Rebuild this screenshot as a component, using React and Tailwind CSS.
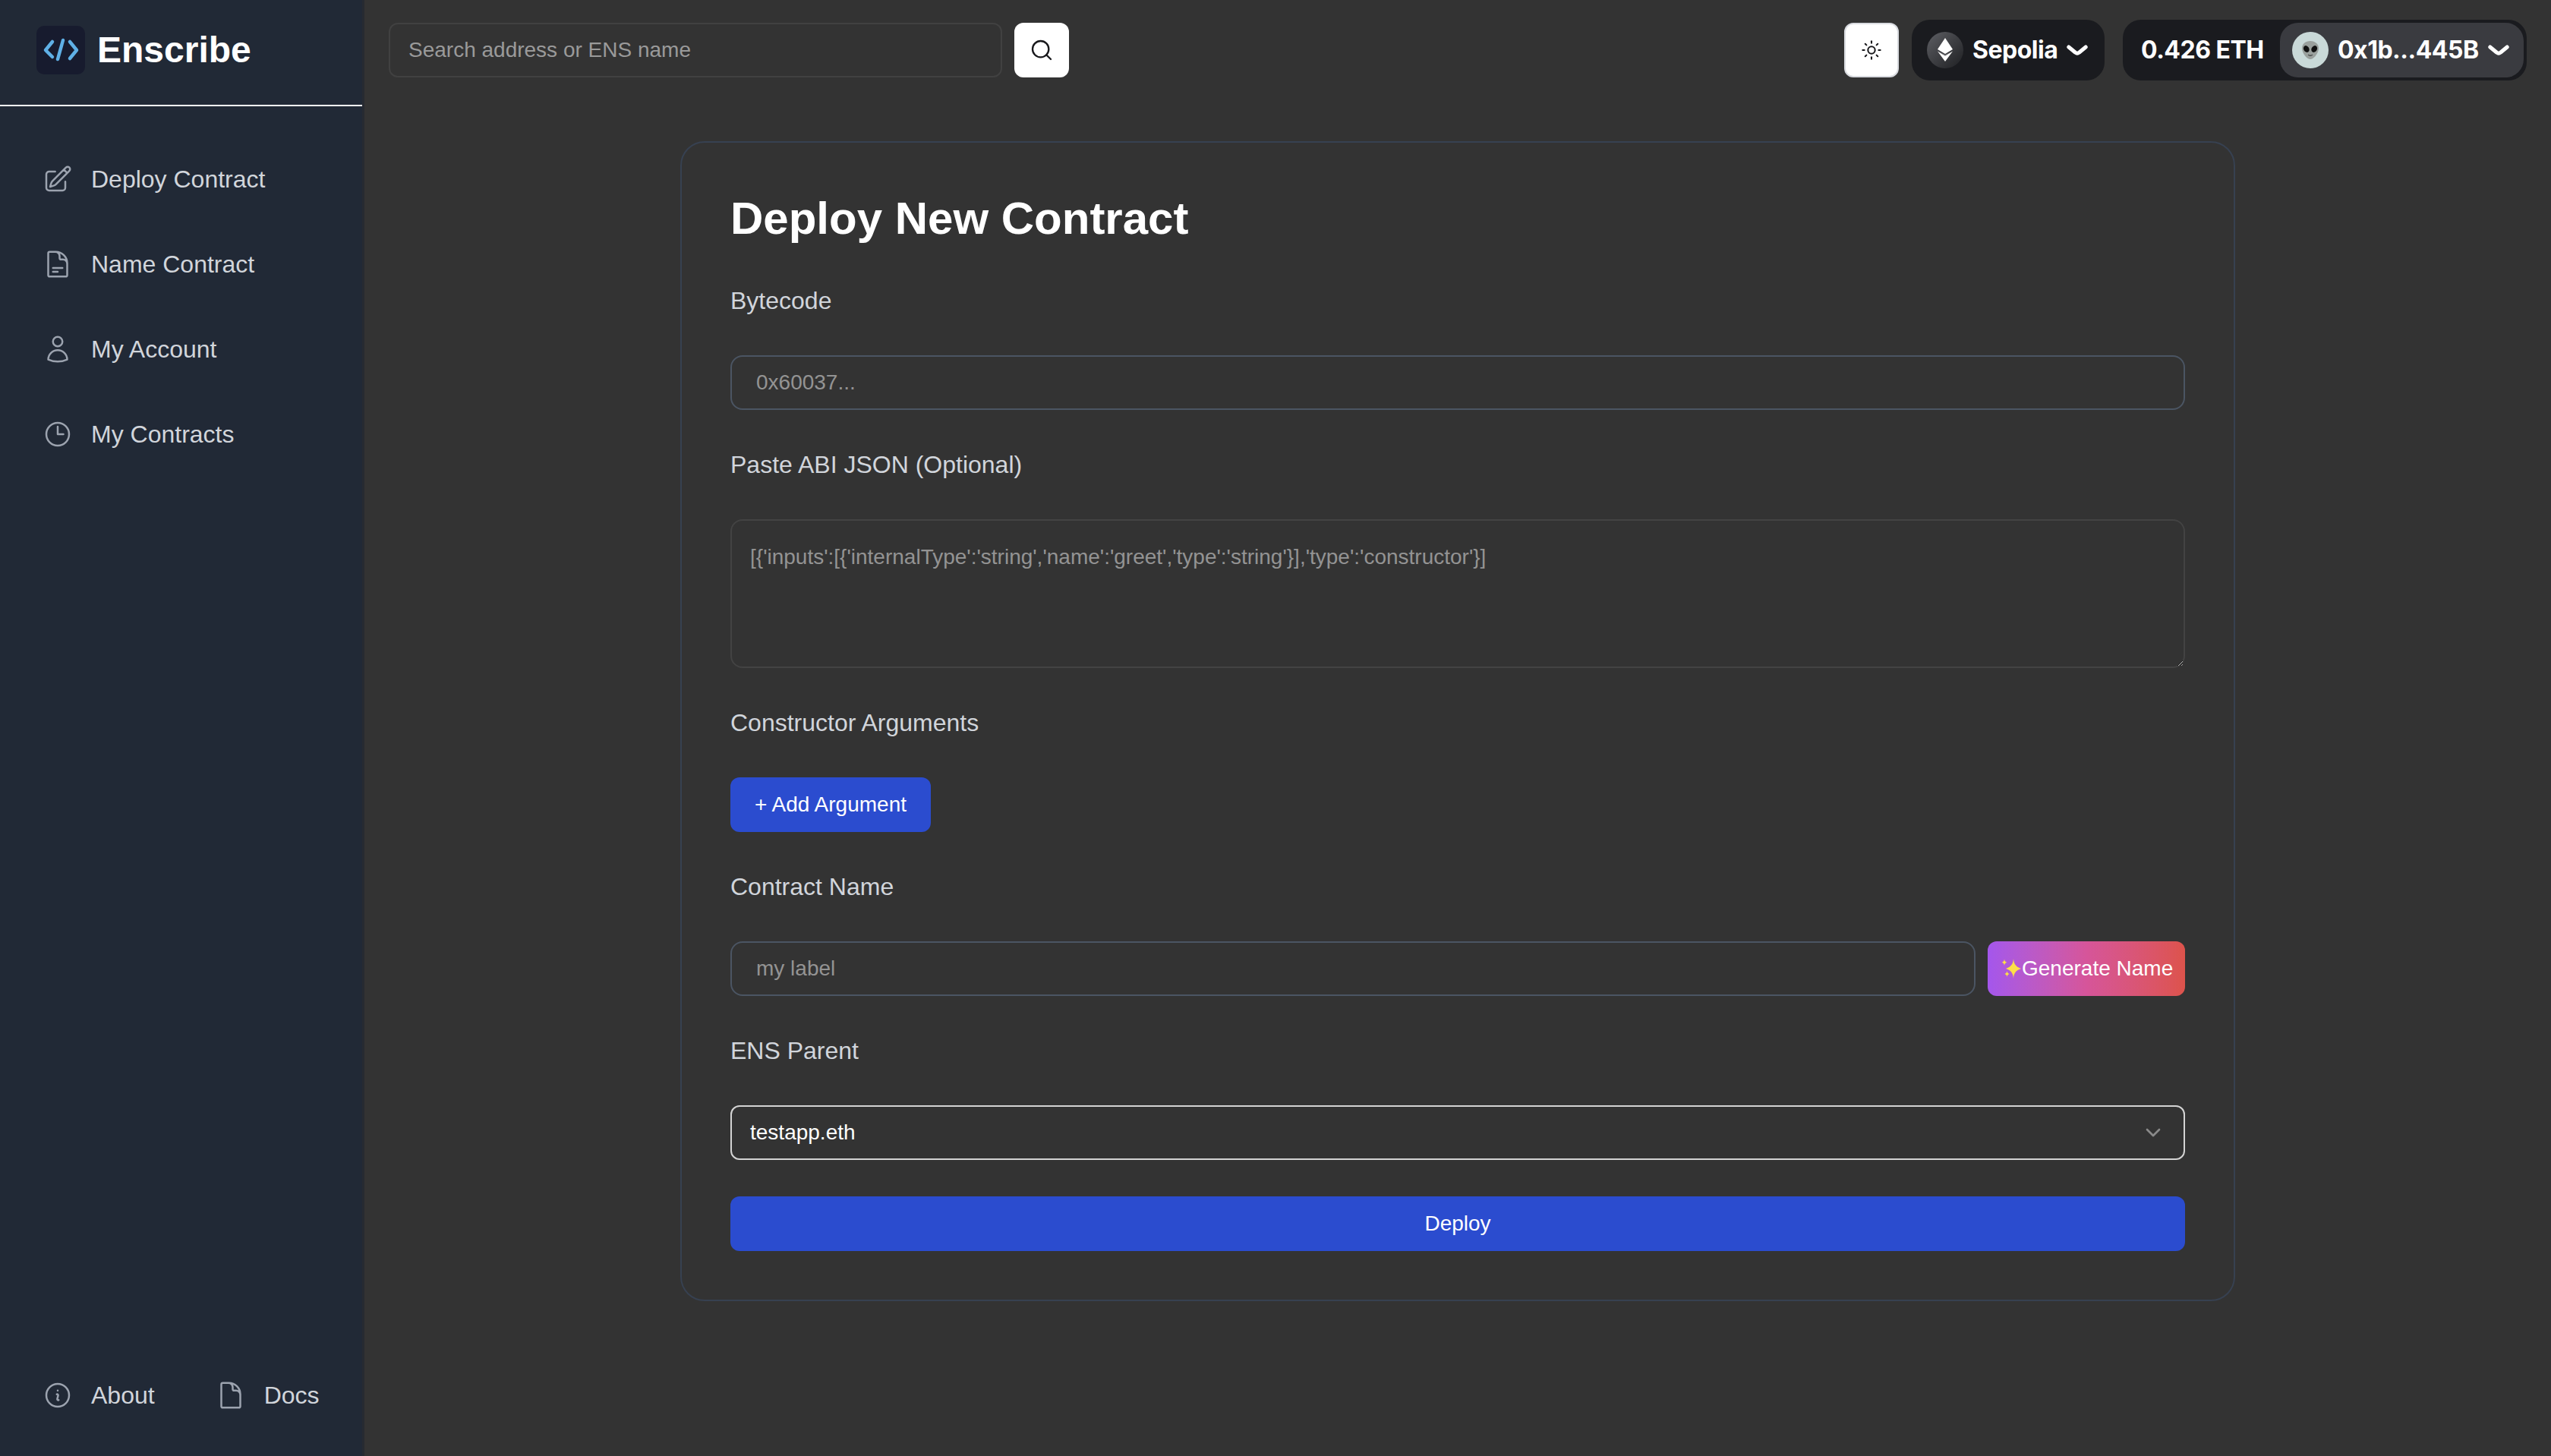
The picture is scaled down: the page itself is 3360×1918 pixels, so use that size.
import { Search, Sun, ChevronDown } from "lucide-react";
import {
  HiOutlinePencilSquare,
  HiOutlineDocumentText,
  HiOutlineUser,
  HiOutlineClock,
  HiOutlineInformationCircle,
  HiOutlineDocument,
} from "react-icons/hi2";

const navItems = [
  { label: "Deploy Contract", Icon: HiOutlinePencilSquare },
  { label: "Name Contract", Icon: HiOutlineDocumentText },
  { label: "My Account", Icon: HiOutlineUser },
  { label: "My Contracts", Icon: HiOutlineClock },
];

function NavLink({ label, Icon }) {
  return (
    <a className="flex items-center gap-6 h-20 text-[32px] leading-[48px] text-[#d1d5db]">
      <Icon size={40} className="text-[#9ca3af] shrink-0" />
      <span>{label}</span>
    </a>
  );
}

function Logo() {
  return (
    <div className="w-16 h-16 rounded-[10px] bg-[#171b2e] shrink-0">
      <svg width="64" height="64" viewBox="0 0 64 64" fill="none" stroke="#5fb0e6" strokeWidth="4.5" strokeLinecap="round" strokeLinejoin="round">
        <path d="M21 21 12 32l9 9" />
        <path d="M35 19l-7 25" />
        <path d="M44 21l9 11-9 11" />
      </svg>
    </div>
  );
}

function Sidebar() {
  return (
    <aside className="w-[480px] shrink-0 bg-[#212936] border-r-[3px] border-[#272a31] flex flex-col justify-between">
      <div>
        <div className="h-[140px] border-b-2 border-white flex items-start pt-[34px] pl-12 gap-4">
          <Logo />
          <span className="text-[48px] leading-[64px] font-bold text-white">Enscribe</span>
        </div>
        <nav className="flex flex-col gap-8 pl-14 pt-[56px]">
          {navItems.map((item) => (
            <NavLink key={item.label} {...item} />
          ))}
        </nav>
      </div>
      <div className="flex gap-20 pl-14 pb-10">
        <NavLink label="About" Icon={HiOutlineInformationCircle} />
        <NavLink label="Docs" Icon={HiOutlineDocument} />
      </div>
    </aside>
  );
}

function PillChevron() {
  return (
    <svg width="28" height="14" viewBox="0 0 14 7" fill="none" className="shrink-0">
      <path d="M12.6 1.5 8.2 5.1c-.7.6-1.7.6-2.4 0L1.4 1.5" stroke="#fff" strokeWidth="2.5" strokeLinecap="round" strokeLinejoin="round" />
    </svg>
  );
}

function EthIcon() {
  return (
    <div className="w-12 h-12 rounded-full bg-linear-to-br from-[#5f6065] to-[#1f2023] shrink-0">
      <svg width="48" height="48" viewBox="0 0 48 48">
        <path d="M24 8 14 23l10 6 10-6z" fill="#fff" />
        <path d="M14 25.5 24 31.5l10-6L24 39z" fill="#fff" />
        <path d="M24 31.5l10-6-10 4.5-10-4.5z" fill="#8b8c90" opacity="0.7" />
      </svg>
    </div>
  );
}

function AlienAvatar() {
  return (
    <div className="w-12 h-12 rounded-full bg-[#c9d9d8] flex items-center justify-center shrink-0">
      <svg width="26" height="26" viewBox="0 0 26 26">
        <path d="M13 1C6.500 1 2 5 2 10.500 2 17 8.500 25 13 25s11-8 11-14.500C24 5 19.500 1 13 1z" fill="#9aa09d" />
        <ellipse cx="7.800" cy="11.500" rx="3.600" ry="4.600" transform="rotate(-30 7.800 11.500)" fill="#111" />
        <ellipse cx="18.200" cy="11.500" rx="3.600" ry="4.600" transform="rotate(30 18.200 11.500)" fill="#111" />
        <path d="M10.500 19.500c1.500 1 3.500 1 5 0" stroke="#222" strokeWidth="1" fill="none" strokeLinecap="round" />
      </svg>
    </div>
  );
}

function Sparkles() {
  return (
    <svg width="27" height="28" viewBox="0 0 27 28" fill="#fde047" className="shrink-0">
      <path d="M16 1c.6 7 3 10.500 10 13-7 2.500-9.400 6-10 13-.6-7-3-10.500-10-13 7-2.500 9.400-6 10-13z" />
      <path d="M4 1.500c.3 2.500 1 3.400 3.200 4.200C5 6.500 4.300 7.400 4 10c-.3-2.600-1-3.500-3.200-4.300C3 4.900 3.700 4 4 1.500z" />
      <path d="M7.500 17c.3 2.300 1 3.200 3 4-2 .8-2.700 1.700-3 4-.3-2.300-1-3.200-3-4 2-.8 2.700-1.700 3-4z" />
    </svg>
  );
}

function Header() {
  return (
    <header className="h-[132px] px-8 flex items-center justify-between">
      <div className="flex items-center gap-4">
        <input
          placeholder="Search address or ENS name"
          className="w-[808px] h-[72px] px-6 rounded-[12px] border-2 border-[#414141] bg-transparent text-[28px] placeholder:text-[#9a9a9a]"
        />
        <button className="w-[72px] h-[72px] rounded-[12px] bg-white flex items-center justify-center">
          <Search size={32} strokeWidth={1.75} className="text-[#18181b]" />
        </button>
      </div>
      <div className="flex items-center font-[Inter,sans-serif] font-bold tracking-[-0.5px] text-[32px] text-white">
        <button className="w-[72px] h-[72px] mr-[17px] rounded-[12px] bg-white border-2 border-[#d9dbe0] flex items-center justify-center">
          <Sun size={28} strokeWidth={1.75} className="text-[#18181b]" />
        </button>
        <div className="h-20 w-[254px] rounded-[24px] bg-[#1a1b1f] flex items-center pl-5 gap-3 mr-6">
          <EthIcon />
          <span>Sepolia</span>
          <PillChevron />
        </div>
        <div className="h-20 w-[532px] rounded-[24px] bg-[#1a1b1f] flex items-center justify-between pl-6 pr-1">
          <span>0.426 ETH</span>
          <div className="h-[72px] w-[321px] rounded-[24px] bg-[#3a3b40] flex items-center pl-4 gap-3">
            <AlienAvatar />
            <span>0x1b...445B</span>
            <PillChevron />
          </div>
        </div>
      </div>
    </header>
  );
}

function Label({ children }) {
  return <label className="block text-[32px] leading-[48px] text-[#d1d5db]">{children}</label>;
}

const inputClass =
  "w-full h-[72px] px-8 rounded-[16px] border-2 border-[#4b5563] bg-transparent text-[28px] placeholder:text-[#939393]";

function DeployForm() {
  return (
    <div className="w-[2048px] mx-auto mt-[54px] rounded-[32px] border-2 border-[#374151] p-16 flex flex-col gap-12">
      <h1 className="text-[60px] leading-[72px] font-bold text-white">Deploy New Contract</h1>
      <Label>Bytecode</Label>
      <input placeholder="0x60037..." className={inputClass} />
      <Label>Paste ABI JSON (Optional)</Label>
      <textarea
        placeholder="[{'inputs':[{'internalType':'string','name':'greet','type':'string'}],'type':'constructor'}]"
        className="w-full h-[196px] px-[24px] py-[28px] rounded-[16px] border-2 border-[#434343] bg-transparent text-[28px] leading-[40px] [color-scheme:dark] placeholder:text-[#939393]"
      />
      <Label>Constructor Arguments</Label>
      <button className="self-start w-[264px] h-[72px] rounded-[12px] bg-[#2b4ccf] text-white text-[28px]">
        + Add Argument
      </button>
      <Label>Contract Name</Label>
      <div className="flex gap-4">
        <input placeholder="my label" className={inputClass} />
        <button className="shrink-0 w-[260px] h-[72px] rounded-[12px] bg-linear-to-r from-[#a456ec] via-[#d6559a] to-[#dd534b] text-white text-[28px] flex items-center pl-[18px]">
          <Sparkles />
          <span>Generate Name</span>
        </button>
      </div>
      <Label>ENS Parent</Label>
      <div className="h-[72px] pl-[24px] pr-[24px] rounded-[12px] border-2 border-[#d4d4d4] flex items-center justify-between text-[28px] text-white">
        <span>testapp.eth</span>
        <ChevronDown size={32} className="text-[#8a8a8a]" />
      </div>
      <button className="h-[72px] rounded-[12px] bg-[#2b4ccf] text-white text-[28px]">Deploy</button>
    </div>
  );
}

export default function App() {
  return (
    <div className="min-h-screen flex bg-[#333333] font-['Liberation_Sans',Arial,sans-serif]">
      <Sidebar />
      <main className="flex-1 min-w-0">
        <Header />
        <DeployForm />
      </main>
    </div>
  );
}
